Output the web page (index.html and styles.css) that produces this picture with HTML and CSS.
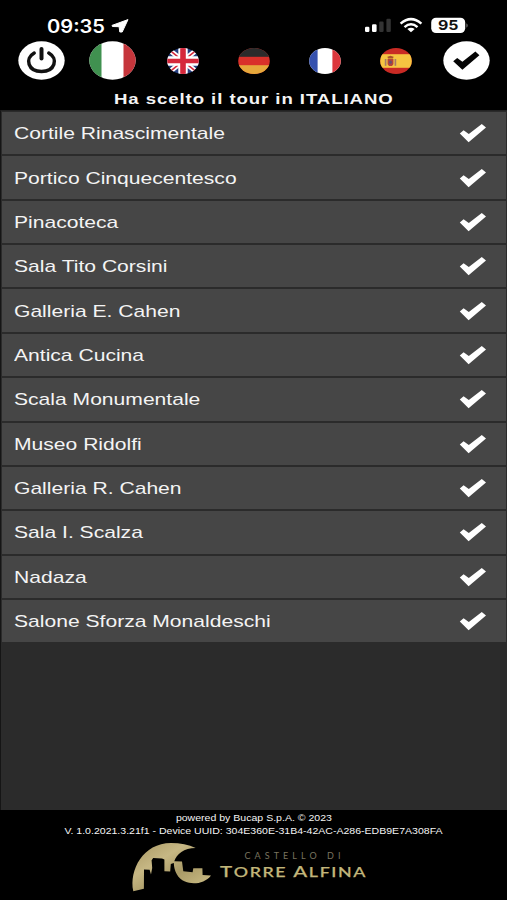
FILE: index.html
```html
<!DOCTYPE html>
<html lang="it">
<head>
    <meta charset="UTF-8">
    <meta name="viewport" content="width=device-width, initial-scale=1.0">
    <title>Castello di Torre Alfina</title>
    <link rel="stylesheet" href="styles.css">
</head>
<body>

<svg class="defs" width="0" height="0">
    <symbol id="check" viewBox="0 0 28 20">
        <path d="M.8 10.6 4.6 7.2 9.8 11 22.8 .9 27 4.6 9.6 19.2Z" stroke-linejoin="round"/>
    </symbol>
    <clipPath id="big"><ellipse cx="23.5" cy="19.5" rx="23.2" ry="19.2"/></clipPath>
    <clipPath id="small"><ellipse cx="16" cy="13" rx="15.8" ry="13"/></clipPath>
</svg>

<div class="app">
    <header class="header">
        <div class="status">
            <svg class="clock" width="86" height="22" viewBox="0 0 86 22">
                <text x="1" y="16.6" textLength="58" lengthAdjust="spacingAndGlyphs">09:35</text>
                <path d="M66 9.4 82 3.6 76.2 16 73.8 16 73.1 10.7 66.4 10.5Z" fill="#fff" stroke="#fff" stroke-linejoin="round"/>
            </svg>
            <svg class="signals" width="106" height="22" viewBox="0 0 106 22">
                <rect x="1" y="10.7" width="4.4" height="5.2" rx="1.2" fill="#fff"/>
                <rect x="8" y="8.3" width="4.6" height="7.6" rx="1.2" fill="#fff"/>
                <rect x="15.2" y="5.5" width="4.4" height="10.4" rx="1.2" fill="#333"/>
                <rect x="22.4" y="2.7" width="4.4" height="13.2" rx="1.2" fill="#333"/>
                <g fill="none" stroke="#fff" stroke-width="2.5">
                    <path d="M36.6 7.6Q47 -1.3 57.4 7.6"/>
                    <path d="M40.5 11.1Q47 5.4 53.5 11.1"/>
                </g>
                <path d="M43.3 13.1Q47 10.2 50.7 13.1L47 16.2Z" fill="#fff"/>
                <rect x="67.2" y="1.7" width="34" height="15.4" rx="4.8" fill="#fff"/>
                <path d="M102.4 7.2Q105 9.4 102.4 11.8Z" fill="#777"/>
                <text class="charge" x="74" y="14.2" textLength="20.5" lengthAdjust="spacingAndGlyphs">95</text>
            </svg>
        </div>

        <nav class="toolbar">
            <svg width="47" height="39" viewBox="0 0 47 39">
                <ellipse cx="23.5" cy="19.5" rx="23.2" ry="19.2" fill="#fff"/>
                <path d="M16.2 12.1C6.5 17.6 10 30.4 23.5 30.4S40.5 17.6 30.8 12.1" fill="none" stroke="#111" stroke-width="3.5" stroke-linecap="round"/>
                <path d="M23.5 8V17.5" stroke="#111" stroke-width="4" stroke-linecap="round"/>
            </svg>
            <svg width="47" height="39" viewBox="0 0 47 39">
                <g clip-path="url(#big)">
                    <rect width="47" height="39" fill="#fff"/>
                    <rect width="12.5" height="39" fill="#409150"/>
                    <rect x="34.5" width="12.5" height="39" fill="#c6363c"/>
                </g>
            </svg>
            <svg width="32" height="26" viewBox="0 0 32 26">
                <g clip-path="url(#small)">
                    <rect width="32" height="26" fill="#263f80"/>
                    <path d="M0 0 32 26M32 0 0 26" stroke="#fff" stroke-width="5"/>
                    <path d="M0 0 32 26M32 0 0 26" stroke="#d5283b" stroke-width="1.6"/>
                    <path d="M16 0V26M0 13H32" stroke="#fff" stroke-width="9.4"/>
                    <path d="M16 0V26" stroke="#d5283b" stroke-width="5.6"/>
                    <path d="M0 13H32" stroke="#d5283b" stroke-width="4.4"/>
                </g>
            </svg>
            <svg width="32" height="26" viewBox="0 0 32 26">
                <g clip-path="url(#small)">
                    <rect width="32" height="26" fill="#d9302a"/>
                    <rect width="32" height="8.8" fill="#2b2b2b"/>
                    <rect y="17.2" width="32" height="9" fill="#e6a83b"/>
                </g>
            </svg>
            <svg width="32" height="26" viewBox="0 0 32 26">
                <g clip-path="url(#small)">
                    <rect width="32" height="26" fill="#fff"/>
                    <rect width="8.6" height="26" fill="#3551ae"/>
                    <rect x="23.4" width="8.6" height="26" fill="#dc373d"/>
                </g>
            </svg>
            <svg width="32" height="26" viewBox="0 0 32 26">
                <g clip-path="url(#small)">
                    <rect width="32" height="26" fill="#c92a24"/>
                    <rect y="6.2" width="32" height="13.6" fill="#f6c441"/>
                    <rect x="4.8" y="11" width="1.6" height="6.8" fill="#a67b69"/>
                    <rect x="14.6" y="11" width="1.6" height="6.8" fill="#a67b69"/>
                    <path d="M7.6 11H13.4V15.2Q13.4 18 10.5 18T7.6 15.2Z" fill="#b5433a"/>
                    <path d="M8 10.4 7.4 8.8 10.5 7.8 13.6 8.8 13 10.4Z" fill="#a8502c"/>
                    <ellipse cx="10.5" cy="14.2" rx="1.4" ry="1.6" fill="#66506e"/>
                </g>
            </svg>
            <svg width="47" height="39" viewBox="0 0 47 39">
                <ellipse cx="23.5" cy="19.5" rx="23.2" ry="19.2" fill="#fff"/>
                <path d="M10.2 20.2 14.2 16.9 19.4 20.8 32.4 10.6 36.4 14.2 19.4 28.8Z" fill="#050505"/>
            </svg>
        </nav>

        <h1 class="title"><span>Ha scelto il tour in ITALIANO</span></h1>
    </header>

    <main class="rooms">
        <div class="room"><span>Cortile Rinascimentale</span><svg class="tick"><use href="#check"/></svg></div>
        <div class="room"><span>Portico Cinquecentesco</span><svg class="tick"><use href="#check"/></svg></div>
        <div class="room"><span>Pinacoteca</span><svg class="tick"><use href="#check"/></svg></div>
        <div class="room"><span>Sala Tito Corsini</span><svg class="tick"><use href="#check"/></svg></div>
        <div class="room"><span>Galleria E. Cahen</span><svg class="tick"><use href="#check"/></svg></div>
        <div class="room"><span>Antica Cucina</span><svg class="tick"><use href="#check"/></svg></div>
        <div class="room"><span>Scala Monumentale</span><svg class="tick"><use href="#check"/></svg></div>
        <div class="room"><span>Museo Ridolfi</span><svg class="tick"><use href="#check"/></svg></div>
        <div class="room"><span>Galleria R. Cahen</span><svg class="tick"><use href="#check"/></svg></div>
        <div class="room"><span>Sala I. Scalza</span><svg class="tick"><use href="#check"/></svg></div>
        <div class="room"><span>Nadaza</span><svg class="tick"><use href="#check"/></svg></div>
        <div class="room"><span>Salone Sforza Monaldeschi</span><svg class="tick"><use href="#check"/></svg></div>
    </main>

    <footer class="footer">
        <p><span>powered by Bucap S.p.A. © 2023</span></p>
        <p><span>V. 1.0.2021.3.21f1 - Device UUID: 304E360E-31B4-42AC-A286-EDB9E7A308FA</span></p>
        <svg class="logo" width="250" height="56" viewBox="0 0 250 56">
            <defs>
                <linearGradient id="gold" x1="0" y1="0" x2="1" y2="1">
                    <stop offset="0" stop-color="#a89762"/>
                    <stop offset=".35" stop-color="#c6b784"/>
                    <stop offset=".6" stop-color="#a99a66"/>
                    <stop offset="1" stop-color="#d3c58d"/>
                </linearGradient>
            </defs>
            <path fill="url(#gold)" d="M8.3 53.3C4 32 18 5 46 5Q60 5 70.7 10C59 10 51.5 16 49.3 23.3L57 23.6 58.3 33.2 67.6 34.2 68.3 30.2 77.4 30.2 77.6 37 86 37.4C80 45.4 68 47 60 43.6 52.6 40.4 49 33 48.8 25L45.8 26 45.2 33.4 39.4 33.2 39.4 21.6 37 20.6 28.2 20 26.6 22.2 27.2 30 26 36.6 24.6 31.8 19 31.6 18.9 50.8Z"/>
            <text class="logo-small" x="119.5" y="21.2" textLength="96">CASTELLO DI</text>
            <text class="logo-big" x="95" y="38.6" textLength="147" lengthAdjust="spacingAndGlyphs">T<tspan class="caps">ORRE</tspan> A<tspan class="caps">LFINA</tspan></text>
        </svg>
    </footer>
</div>

</body>
</html>
```

FILE: styles.css
```css
* {
    box-sizing: border-box;
}

body {
    margin: 0;
    background: #000;
    color: #f4f4f4;
    font-family: "Liberation Sans", Arial, sans-serif;
}

.defs {
    display: block;
}

.app {
    display: flex;
    flex-direction: column;
    height: 900px;
    overflow: hidden;
}

.header {
    height: 110px;
}

.status {
    display: flex;
    justify-content: space-between;
    height: 41px;
    padding: 16px 37px 0 46px;
}

.clock text {
    font: 600 18px Inter, sans-serif;
    fill: #fff;
}

.signals .charge {
    font: 700 13.5px Inter, sans-serif;
    fill: #111;
}

.toolbar {
    display: grid;
    grid-template-columns: repeat(7, 1fr);
    align-items: center;
    justify-items: center;
    height: 39px;
    padding: 0 5px 0 6px;
}

.title {
    margin: 9px 0 0;
    font-size: 15px;
    line-height: 20px;
    letter-spacing: 0.75px;
    text-align: center;
}

/* all the texts are drawn wider than the font */
.title span,
.room span,
.footer span {
    display: inline-block;
    white-space: nowrap;
    transform: scaleX(1.24);
}

.rooms {
    height: 700px;
    padding: 1px 1px 0;
    background: #2b2b2b;
    border-top: 1px solid #222;
    border-left: 1px solid #151515;
}

.room {
    display: flex;
    align-items: center;
    justify-content: space-between;
    height: 44.37px;
    padding: 0 19px 0 12px;
    background: #464646;
    border-bottom: 2px solid #2b2b2b;
    font-size: 17px;
}

.room span {
    padding-top: 2px;
    transform-origin: left;
}

.tick {
    width: 28px;
    height: 20px;
    fill: #fff;
}

.footer {
    height: 90px;
    padding-top: 2px;
    text-align: center;
}

.footer p {
    margin: 0;
    font-size: 8.5px;
    line-height: 13px;
}

.logo {
    display: block;
    margin: 0 auto 0 125px;
}

.logo-small {
    font: 9px Lato, sans-serif;
    fill: #79735f;
}

.logo-big {
    font: 500 15.4px Lato, sans-serif;
    letter-spacing: 1.2px;
    fill: #c2b67a;
    stroke: #c2b67a;
    stroke-width: 0.25px;
}

.logo-big .caps {
    font-size: 13.4px;
}
```
